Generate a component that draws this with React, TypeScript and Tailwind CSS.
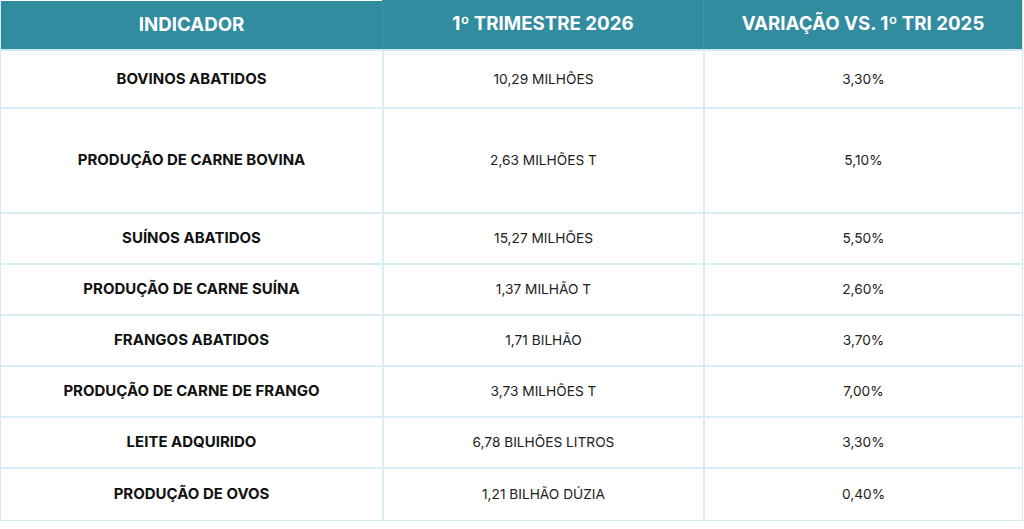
import React from "react";

const rows: { name: string; value: string; variation: string; h: string }[] = [
  { name: "BOVINOS ABATIDOS", value: "10,29 MILHÕES", variation: "3,30%", h: "h-[58px]" },
  { name: "PRODUÇÃO DE CARNE BOVINA", value: "2,63 MILHÕES T", variation: "5,10%", h: "h-[105px]" },
  { name: "SUÍNOS ABATIDOS", value: "15,27 MILHÕES", variation: "5,50%", h: "h-[51px]" },
  { name: "PRODUÇÃO DE CARNE SUÍNA", value: "1,37 MILHÃO T", variation: "2,60%", h: "h-[51px]" },
  { name: "FRANGOS ABATIDOS", value: "1,71 BILHÃO", variation: "3,70%", h: "h-[51px]" },
  { name: "PRODUÇÃO DE CARNE DE FRANGO", value: "3,73 MILHÕES T", variation: "7,00%", h: "h-[51px]" },
  { name: "LEITE ADQUIRIDO", value: "6,78 BILHÕES LITROS", variation: "3,30%", h: "h-[51px]" },
  { name: "PRODUÇÃO DE OVOS", value: "1,21 BILHÃO DÚZIA", variation: "0,40%", h: "h-[51px]" },
];

export default function App() {
  return (
    <div className="w-[1024px] h-[529px] bg-white" style={{ fontFamily: "Inter, 'Noto Sans', sans-serif" }}>
      <div className="w-[1023px] border-l border-r border-b border-[#d4ebf4]">
        <div className="grid grid-cols-[381px_321px_1fr] h-[51px] bg-[#318c9f] border-b-2 border-[#cfe8f1] text-white font-bold text-[18.7px]">
          <div className="flex items-center justify-center border-t border-white">INDICADOR</div>
          <div className="flex items-center justify-center border-l border-[#3a95a7]">1º TRIMESTRE 2026</div>
          <div className="flex items-center justify-center border-l border-[#3a95a7]">VARIAÇÃO VS. 1º TRI 2025</div>
        </div>
        {rows.map((r, i) => (
          <div
            key={r.name}
            className={`grid grid-cols-[381px_321px_1fr] ${r.h} ${i < rows.length - 1 ? "border-b-2 border-[#dbeef6]" : ""}`}
          >
            <div className="flex items-center justify-center font-bold text-[15px] text-[#111]">{r.name}</div>
            <div className="flex items-center justify-center border-l-2 border-[#dbeef6] text-[13.7px] text-[#222]">{r.value}</div>
            <div className="flex items-center justify-center border-l-2 border-[#dbeef6] text-[13.7px] text-[#222]">{r.variation}</div>
          </div>
        ))}
      </div>
    </div>
  );
}
